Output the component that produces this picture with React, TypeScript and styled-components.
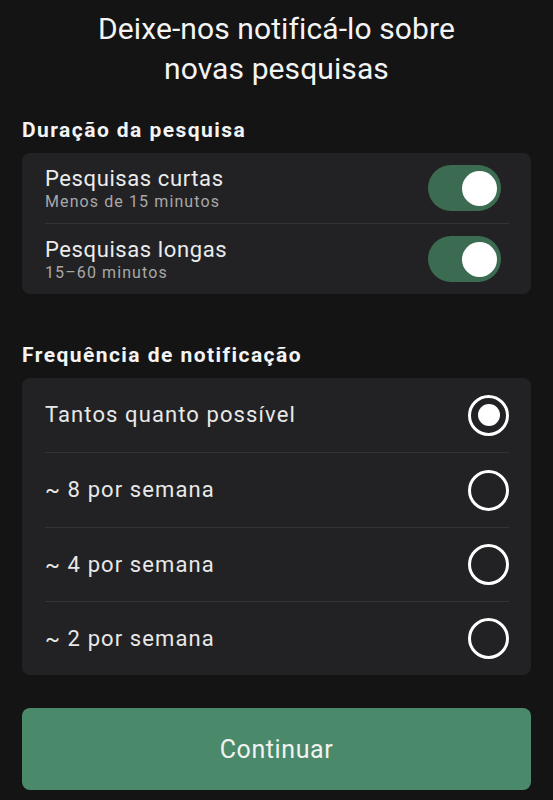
import React, { useState } from "react";
import styled, { createGlobalStyle } from "styled-components";

const Global = createGlobalStyle`
  html, body { margin: 0; padding: 0; background: #141414; }
  body { font-family: Roboto, "Noto Sans", sans-serif; color: #f2f2f2; }
  * { box-sizing: border-box; }
`;

const Page = styled.div`
  width: 553px;
  min-height: 800px;
  background: #141414;
  padding: 9px 22px 0 22px;
  display: flex;
  flex-direction: column;
`;

const Title = styled.h1`
  margin: 0;
  text-align: center;
  font-size: 30px;
  line-height: 40px;
  font-weight: 400;
  color: #f4f4f4;
  letter-spacing: 0.1px;
`;

const SectionTitle = styled.h2<{ $top: number }>`
  margin: ${(p) => p.$top}px 0 10px 0;
  font-size: 21px;
  line-height: 26px;
  font-weight: 700;
  color: #f4f4f4;
  letter-spacing: 1.45px;
`;

const Card = styled.div`
  background: #222224;
  border-radius: 8px;
  padding: 0 22px 0 23px;
  display: flex;
  flex-direction: column;
`;

const Row = styled.div<{ $h: number; $divider: boolean }>`
  height: ${(p) => p.$h}px;
  display: flex;
  align-items: center;
  justify-content: space-between;
  border-top: ${(p) => (p.$divider ? "1px solid #343436" : "none")};
`;

const TextCol = styled.div`
  display: flex;
  flex-direction: column;
  padding-top: 2px;
`;

const Label = styled.span`
  font-size: 22px;
  line-height: 26px;
  color: #ececec;
  letter-spacing: 0.6px;
`;

const Sub = styled.span`
  font-size: 16px;
  line-height: 20px;
  color: #a8a8a8;
  letter-spacing: 1.1px;
`;

const OptionLabel = styled.span`
  font-size: 22px;
  line-height: 26px;
  color: #e8e8e8;
  letter-spacing: 1.1px;
`;

const Toggle = styled.button<{ $on: boolean }>`
  width: 73px;
  height: 46px;
  border-radius: 23px;
  border: none;
  padding: 0 4px;
  margin-right: 8px;
  background: ${(p) => (p.$on ? "#3b6b50" : "#555")};
  display: flex;
  align-items: center;
  justify-content: ${(p) => (p.$on ? "flex-end" : "flex-start")};
  cursor: pointer;
`;

const Knob = styled.span`
  width: 35px;
  height: 35px;
  border-radius: 50%;
  background: #ffffff;
  display: block;
`;

const Radio = styled.span<{ $checked: boolean }>`
  width: 41px;
  height: 41px;
  border-radius: 50%;
  border: 3px solid #ffffff;
  display: flex;
  align-items: center;
  justify-content: center;
  flex-shrink: 0;
  &::after {
    content: "";
    width: 22px;
    height: 22px;
    border-radius: 50%;
    background: #ffffff;
    display: ${(p) => (p.$checked ? "block" : "none")};
  }
`;

const Button = styled.button`
  margin-top: 33px;
  height: 82px;
  width: 100%;
  border: none;
  border-radius: 8px;
  background: #4a8a6a;
  color: #f2f2f2;
  font-family: Roboto, "Noto Sans", sans-serif;
  font-size: 25px;
  letter-spacing: 0.6px;
  cursor: pointer;
`;

const options = [
  "Tantos quanto possível",
  "~ 8 por semana",
  "~ 4 por semana",
  "~ 2 por semana",
];

const rowHeights = [74, 75, 74, 74];

export default function App() {
  const [short, setShort] = useState(true);
  const [long, setLong] = useState(true);
  const [freq, setFreq] = useState(0);
  return (
    <Page>
      <Global />
      <Title>
        Deixe-nos notificá-lo sobre
        <br />
        novas pesquisas
      </Title>
      <SectionTitle $top={28}>Duração da pesquisa</SectionTitle>
      <Card>
        <Row $h={70} $divider={false}>
          <TextCol>
            <Label>Pesquisas curtas</Label>
            <Sub>Menos de 15 minutos</Sub>
          </TextCol>
          <Toggle $on={short} onClick={() => setShort(!short)}>
            <Knob />
          </Toggle>
        </Row>
        <Row $h={71} $divider>
          <TextCol>
            <Label>Pesquisas longas</Label>
            <Sub>15–60 minutos</Sub>
          </TextCol>
          <Toggle $on={long} onClick={() => setLong(!long)}>
            <Knob />
          </Toggle>
        </Row>
      </Card>
      <SectionTitle $top={48}>Frequência de notificação</SectionTitle>
      <Card>
        {options.map((o, i) => (
          <Row key={o} $h={rowHeights[i]} $divider={i > 0} onClick={() => setFreq(i)}>
            <OptionLabel>{o}</OptionLabel>
            <Radio $checked={freq === i} />
          </Row>
        ))}
      </Card>
      <Button>Continuar</Button>
    </Page>
  );
}
